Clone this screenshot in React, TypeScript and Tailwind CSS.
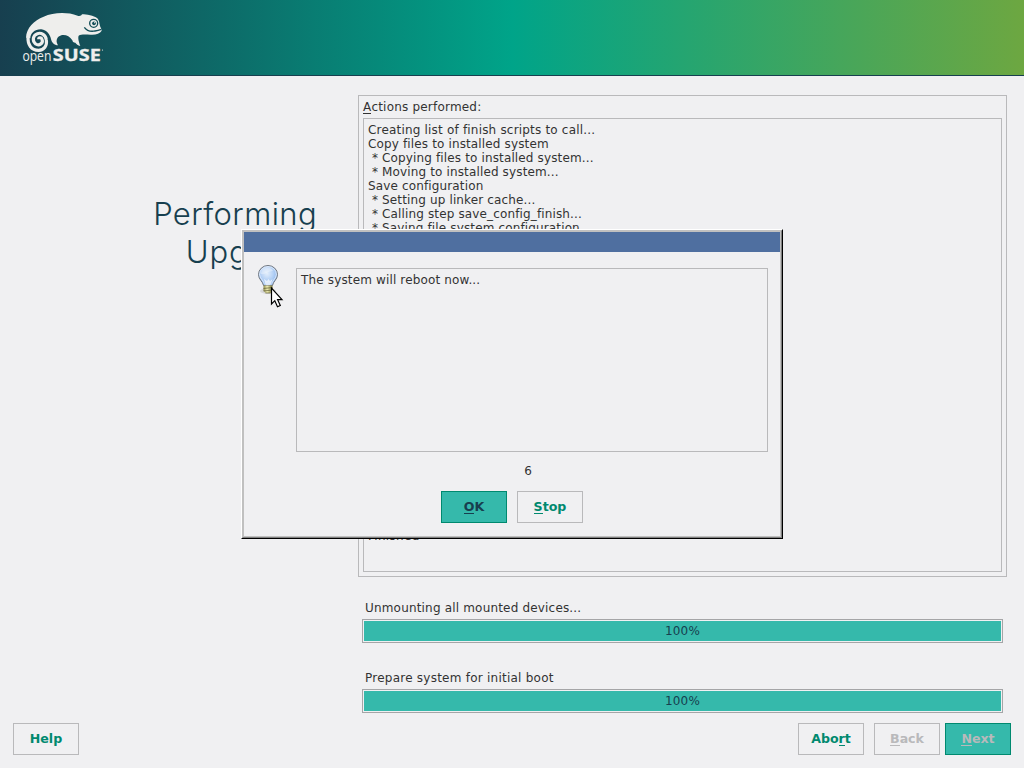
import type { ReactNode } from "react";

const FIRST_LINE = "Creating list of finish scripts to call...";
const LOG = [
  "Copy files to installed system",
  " * Copying files to installed system...",
  " * Moving to installed system...",
  "Save configuration",
  " * Setting up linker cache...",
  " * Calling step save_config_finish...",
  " * Saving file system configuration...",
];

function Key({ children }: { children: ReactNode }) {
  return <span className="inline-block h-[15px] border-b border-current">{children}</span>;
}

function Button({ kind = "plain", children }: { kind?: "plain" | "primary" | "disabled" | "primaryDisabled"; children: ReactNode }) {
  const styles = {
    plain: "border-[#b9b9bb] text-[#00896f]",
    primary: "border-[#00896f] bg-[#35b9ab] text-[#173f4f]",
    disabled: "border-[#b9b9bb] text-[#b9b9bb]",
    primaryDisabled: "border-[#00896f] bg-[#35b9ab] text-[#b9b9bb]",
  };
  return (
    <button className={`flex h-8 w-[66px] shrink-0 items-center justify-center border pb-px text-[12.6px] leading-[15px] font-bold ${styles[kind]}`}>
      <span className="flex">{children}</span>
    </button>
  );
}

function Progress({ label, spacing }: { label: string; spacing: string }) {
  return (
    <div className="h-[70px]">
      <div className={`h-[18px] pl-[3px] text-[12px] leading-[14px] ${spacing}`}>{label}</div>
      <div className="mr-[21px] h-6 border border-[#a5a5a7] p-px">
        <div className="h-5 bg-[#35b9ab] text-center text-[12px] leading-5 tracking-[0.2px] text-[#173f4f]">100%</div>
      </div>
    </div>
  );
}

function Logo() {
  return (
    <svg width="90" height="70" viewBox="0 0 90 70" fill="#eeeeec">
      <g transform="translate(-12 0.300) scale(0.33333)">
        <path d="M48 112C49 83 72 60 101 49C129 37 169 34 203 46C209 49 214 46 216 42C230 42 251 46 262 54C267 58 268 69 270 77C272 83 275 86 275 91C270 100 257 104 242 103C228 103 214 101 206 106C203 113 207 126 211 137C204 136 199 131 196 127C190 127 188 124 187 120C180 109 171 104 160 104C149 104 141 111 140 120C139 126 142 131 144 135C133 135 125 127 123 116C120 103 111 89 94 87C75 86 61 99 61 114Z" />
        <path d="M54 112C53 132 63 150 86 150C102 150 112 136 109 119C107 104 94 96 82 100C68 105 66 122 77 131C88 138 101 128 96 117C94 111 86 112 86 117" fill="none" stroke="#eeeeec" strokeWidth="9.5" />
        <circle cx="251" cy="69" r="12" fill="#eeeeec" stroke="#124d57" strokeWidth="4" />
        <circle cx="252" cy="69" r="5.500" fill="#124d57" />
        <circle cx="254" cy="67" r="1.800" />
        <path d="M223 81C230 91 243 94 255 92C264 91 269 89 274 87" fill="none" stroke="#124d57" strokeWidth="4" />
      </g>
      <text transform="translate(0.400 61) scale(0.810 1)" fontFamily="Open Sans, sans-serif" fontSize="15">open</text>
      <text transform="translate(30.800 61.300) scale(1.240 1)" fontFamily="Open Sans, sans-serif" fontSize="16" fontWeight="bold" stroke="#eeeeec" strokeWidth="0.300">SUSE</text>
      <circle cx="80.500" cy="50" r="0.600" />
    </svg>
  );
}

function Bulb() {
  return (
    <svg width="32" height="46" viewBox="0 0 32 46" className="shrink-0">
      <defs>
        <radialGradient id="glass" cx="45%" cy="40%" r="62%">
          <stop offset="0" stopColor="#e3eefb" />
          <stop offset="0.55" stopColor="#b3d0f5" />
          <stop offset="1" stopColor="#82aeea" />
        </radialGradient>
        <linearGradient id="brass" x1="0" x2="1" y1="0" y2="0">
          <stop offset="0" stopColor="#8b8948" />
          <stop offset="0.4" stopColor="#f2efb4" />
          <stop offset="1" stopColor="#7a7739" />
        </linearGradient>
      </defs>
      <ellipse cx="12" cy="27" rx="8" ry="3" fill="#000" opacity="0.1" />
      <path d="M7.500 21.500C7 17.500 2.500 15.500 2.500 10.500a9.500 9 0 0 1 19 0c0 5-4.500 7-5 11z" fill="url(#glass)" stroke="#70767e" />
      <path d="M8.500 20.500C8 16.500 3.600 14.500 3.600 10.500a8.400 7.900 0 0 1 16.800 0c0 4-4.400 6-4.900 10" fill="none" stroke="#f4f8ff" strokeWidth="0.700" />
      <path d="M5 10c0-8 11-8 12-3-5 0-8 4-12 3z" fill="#fff" opacity="0.35" />
      <path d="M9.500 21l-1.500-6 3 2 1.500-2 1.500 2 2.500-2-2 6z" fill="#fff" opacity="0.7" />
      <path d="M7.500 21.500h9v5l-2 2.500h-5l-2-2.500z" fill="url(#brass)" />
      <path d="M7.500 24.500l9-1M7.500 27l9-1M9.500 29h5" stroke="#5f5c35" strokeWidth="0.700" />
      <path d="M15.500 24v16l3.300-3.300 2.700 6 2.800-1.200-2.700-5.800h4.400z" fill="#fff" stroke="#000" strokeWidth="1.200" />
    </svg>
  );
}

export default function App() {
  return (
    <div className="relative flex h-[768px] w-[1024px] flex-col overflow-hidden bg-[#f0f0f2] font-['DejaVu_Sans',sans-serif] text-[#333]">
      <header className="h-[76px] shrink-0 border-b border-[#173f4f] bg-linear-to-r/srgb from-[#173f4f] via-[#00a489] to-[#6da741] pl-[22px]">
        <Logo />
      </header>

      <div className="flex h-[647px] shrink-0">
        <aside className="w-[317px] shrink-0 pt-[119px] text-right font-['Inter',sans-serif] text-[31px] leading-[38px] font-[350] tracking-[0.4px] text-[#173f4f]">
          Performing<br /><span className="tracking-[0.9px]">Upgrade</span>
        </aside>
        <main className="flex min-w-0 flex-1 flex-col pt-[19px] pl-[41px]">
          <section className="mr-[17px] flex h-[482px] shrink-0 flex-col border border-[#b9b9bb] p-1">
            <div className="h-[18px] text-[12px] leading-[14px] tracking-[0.2px]">
              <span className="inline-block h-[14px] border-b border-current">A</span>ctions performed:
            </div>
            <div className="min-h-0 flex-1 border border-[#b9b9bb] px-1 pt-1 text-[12px] leading-[14px] tracking-[0.14px] whitespace-pre">
              <div className="tracking-[0.19px]">{FIRST_LINE}</div>
              {LOG.map((line) => <div key={line}>{line}</div>)}
              <div className="pt-[294px] tracking-[0.3px]">Finished</div>
            </div>
          </section>
          <div className="mt-6 pl-1">
            <Progress label="Unmounting all mounted devices..." spacing="tracking-[0.18px]" />
            <Progress label="Prepare system for initial boot" spacing="tracking-[0.24px]" />
          </div>
        </main>
      </div>

      <footer className="flex shrink-0 pr-[13px] pl-[13px]">
        <Button>Help</Button>
        <div className="ml-auto flex">
          <Button>Abo<Key>r</Key>t</Button>
          <div className="ml-[10px]"><Button kind="disabled"><Key>B</Key>ack</Button></div>
          <div className="ml-[5px]"><Button kind="primaryDisabled"><Key>N</Key>ext</Button></div>
        </div>
      </footer>

      <div className="absolute top-[229px] left-[241px] h-[310px] w-[542px] border border-t-white border-r-black border-b-black border-l-white">
        <div className="h-full border border-t-[#c0c0c0] border-r-[#808080] border-b-[#808080] border-l-[#c0c0c0]">
          <div className="flex h-full flex-col border border-[#c0c0c0] bg-[#f0f0f2]">
            <div className="h-5 shrink-0 bg-[#4f6fa0]" />
            <div className="flex pt-3 pl-3">
              <Bulb />
              <div className="mt-1 ml-2 h-[184px] w-[472px] border border-[#b9b9bb] px-1 pt-1 text-[12px] leading-[14px] tracking-[0.15px]">
                The system will reboot now...
              </div>
            </div>
            <div className="mt-3 pl-8 text-center text-[12px] leading-[14px]">6</div>
            <div className="mt-[13px] flex justify-center gap-[10px]">
              <Button kind="primary"><Key>O</Key>K</Button>
              <Button><Key>S</Key>top</Button>
            </div>
          </div>
        </div>
      </div>
    </div>
  );
}
